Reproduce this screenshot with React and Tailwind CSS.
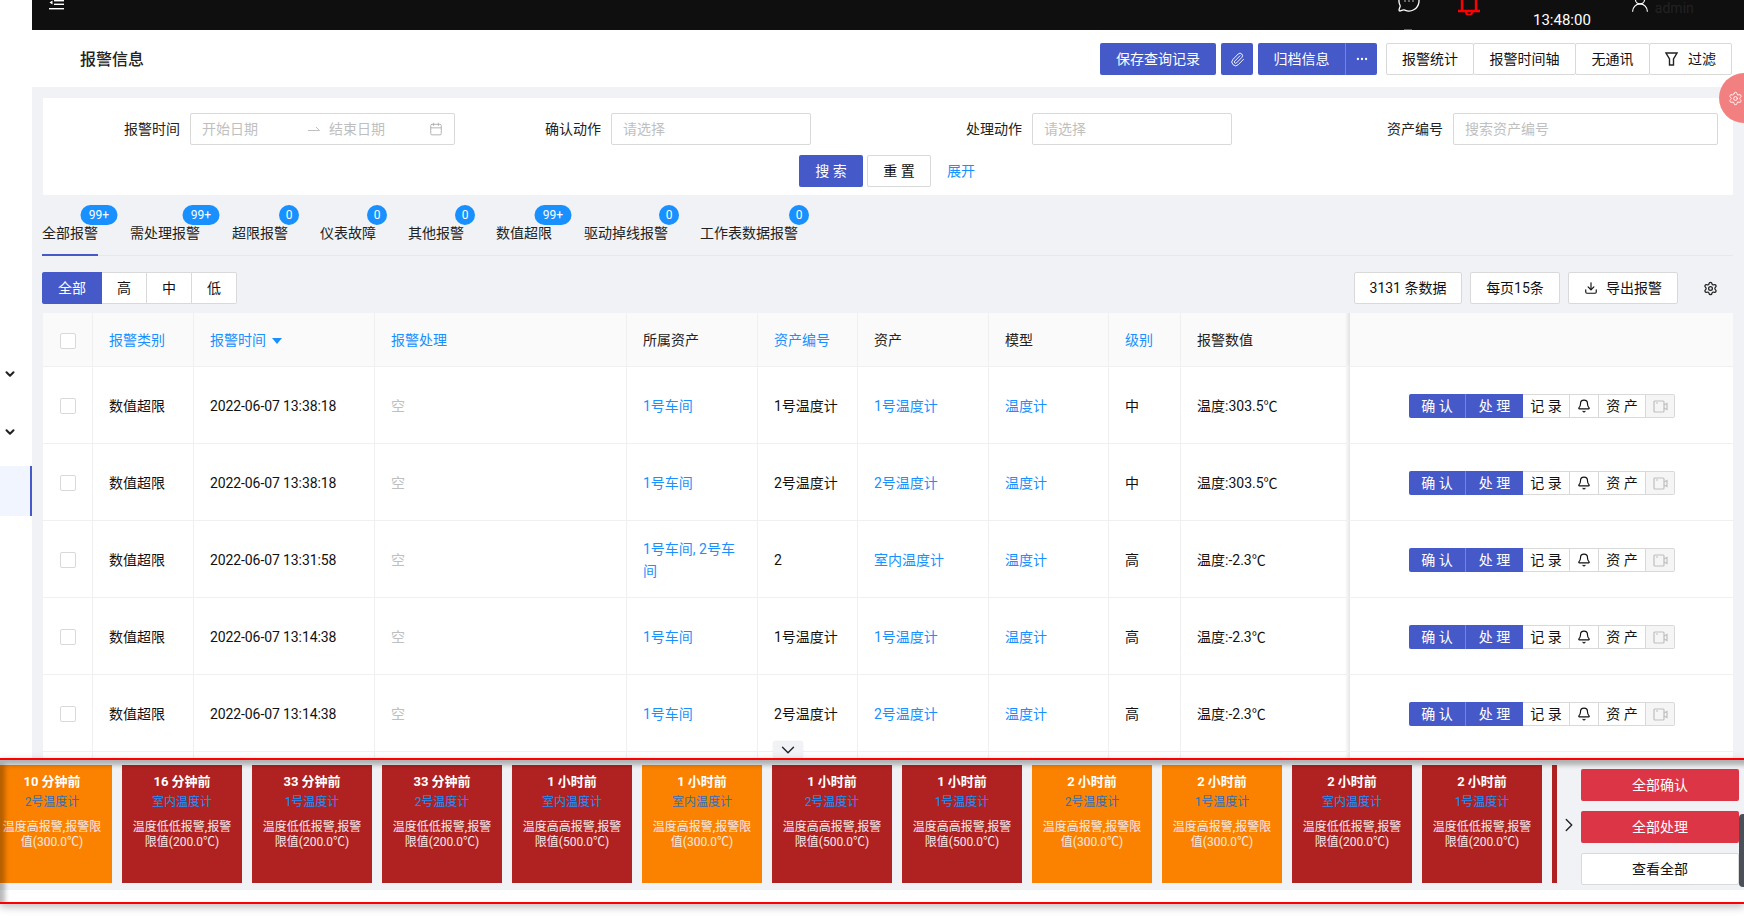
import { Bell, Calendar, ChevronDown, ChevronRight, Download, Ellipsis, MessageCircleMore, Paperclip, Settings, UserRound } from 'lucide-react';

const tabs = [
  { name: '全部报警', badge: '99+', active: true },
  { name: '需处理报警', badge: '99+' },
  { name: '超限报警', badge: '0' },
  { name: '仪表故障', badge: '0' },
  { name: '其他报警', badge: '0' },
  { name: '数值超限', badge: '99+' },
  { name: '驱动掉线报警', badge: '0' },
  { name: '工作表数据报警', badge: '0' },
];

const rows = [
  { time: '2022-06-07 13:38:18', place: '1号车间', code: '1号温度计', asset: '1号温度计', level: '中', value: '温度:303.5℃' },
  { time: '2022-06-07 13:38:18', place: '1号车间', code: '2号温度计', asset: '2号温度计', level: '中', value: '温度:303.5℃' },
  { time: '2022-06-07 13:31:58', place: '1号车间, 2号车间', code: '2', asset: '室内温度计', level: '高', value: '温度:-2.3℃' },
  { time: '2022-06-07 13:14:38', place: '1号车间', code: '1号温度计', asset: '1号温度计', level: '高', value: '温度:-2.3℃' },
  { time: '2022-06-07 13:14:38', place: '1号车间', code: '2号温度计', asset: '2号温度计', level: '高', value: '温度:-2.3℃' },
];

const low = '温度低低报警,报警限值(200.0℃)';
const highHigh = '温度高高报警,报警限值(500.0℃)';
const high = '温度高报警,报警限值(300.0℃)';

const cards = [
  { ago: '10 分钟前', device: '2号温度计', msg: high, warn: true },
  { ago: '16 分钟前', device: '室内温度计', msg: low },
  { ago: '33 分钟前', device: '1号温度计', msg: low },
  { ago: '33 分钟前', device: '2号温度计', msg: low },
  { ago: '1 小时前', device: '室内温度计', msg: highHigh },
  { ago: '1 小时前', device: '室内温度计', msg: high, warn: true },
  { ago: '1 小时前', device: '2号温度计', msg: highHigh },
  { ago: '1 小时前', device: '1号温度计', msg: highHigh },
  { ago: '2 小时前', device: '2号温度计', msg: high, warn: true },
  { ago: '2 小时前', device: '1号温度计', msg: high, warn: true },
  { ago: '2 小时前', device: '室内温度计', msg: low },
  { ago: '2 小时前', device: '1号温度计', msg: low },
];

const gridCols = 'grid grid-cols-[50px_101px_181px_252px_131px_100px_131px_120px_72px_169px_383px]';
const cell = 'flex items-center px-[16px] pt-[2px] border-r border-[#f0f0f0]';

function Field({ width, label, children }) {
  return (
    <div className={`flex items-center justify-end ${width}`}>
      <span className="mr-[10px] text-[#222]">{label}</span>
      {children}
    </div>
  );
}

function HeaderBtn({ children, className = '' }) {
  return (
    <button className={`flex h-8 items-center justify-center border border-[#d9d9d9] bg-white text-[#111] rounded-[2px] ${className}`}>
      {children}
    </button>
  );
}

function Checkbox() {
  return <span className="block h-4 w-4 rounded-[2px] border border-[#d9d9d9] bg-white" />;
}

function FixedShadow() {
  return <span className="absolute inset-y-0 left-[-5px] w-[5px] bg-gradient-to-l from-black/10 to-transparent" />;
}

function Actions() {
  return (
    <div className="flex h-6 items-center text-[#111]">
      <button className="flex h-6 w-[57px] items-center justify-center border-r border-[#7283d8] bg-[#4559c8] text-white rounded-l-[2px]">确 认</button>
      <button className="flex h-6 w-[57px] items-center justify-center bg-[#4559c8] text-white">处 理</button>
      <button className="flex h-6 w-[47px] items-center justify-center border-y border-r border-[#d9d9d9]">记 录</button>
      <button className="flex h-6 w-[29px] items-center justify-center border-y border-r border-[#d9d9d9]">
        <Bell size={14} strokeWidth={2} />
      </button>
      <button className="flex h-6 w-[47px] items-center justify-center border-y border-r border-[#d9d9d9]">资 产</button>
      <button className="flex h-6 w-[29px] items-center justify-center border-y border-r border-[#d9d9d9] bg-[#f5f5f5] rounded-r-[2px]">
        <svg width="15" height="13" viewBox="0 0 15 13" fill="none" stroke="#bfbfbf" strokeWidth="1.2">
          <rect x="1" y="1" width="10" height="11" rx="1" />
          <path d="M11 5l3-1.5v6L11 8M3 3h2" />
        </svg>
      </button>
    </div>
  );
}

function AlarmCard({ ago, device, msg, warn }) {
  return (
    <div className={`h-[118px] w-[120px] shrink-0 px-[8px] pt-[8px] text-center text-white ${warn ? 'bg-[#fb8200]' : 'bg-[#b02121]'}`}>
      <div className="text-[13px] font-bold leading-[18px]">{ago}</div>
      <div className={`mt-[1px] text-[12px] leading-[20px] ${warn ? 'text-[#2f6fc0]' : 'text-[#1890ff]'}`}>{device}</div>
      <div className="mt-[8px] text-[12px] leading-[15px] text-[#f5e9e9]">{msg}</div>
    </div>
  );
}

export default function App() {
  return (
    <div className="relative flex h-[917px] w-[1744px] overflow-hidden bg-white text-[14px] [font-family:Roboto,'Noto_Sans_CJK_SC',sans-serif]">
      {/* Sidebar */}
      <div className="flex w-8 shrink-0 flex-col">
        <ChevronDown size={14} strokeWidth={3.5} className="ml-[3px] mt-[367px] text-[#222]" />
        <ChevronDown size={14} strokeWidth={3.5} className="ml-[3px] mt-[44px] text-[#222]" />
        <div className="mt-[27px] h-[50px] border-r-2 border-[#4559c8] bg-[#f0f5ff]" />
      </div>

      <div className="flex min-w-0 flex-1 flex-col">
        {/* Top bar, scrolled a little out of view */}
        <div className="relative flex h-[30px] shrink-0 items-start overflow-hidden bg-[#0f0f10]">
          <svg width="15" height="10" viewBox="0 0 15 10" className="ml-[17px]" fill="#fff">
            <rect x="5" y="0" width="10" height="1.4" />
            <rect x="5" y="3.6" width="10" height="1.4" />
            <rect x="0" y="8" width="15" height="1.4" />
            <path d="M3.5 0.5v4l-3-2z" />
          </svg>
          <MessageCircleMore size={24} strokeWidth={1.3} className="ml-[1333px] mt-[-11px] text-white" />
          <svg width="24" height="15" viewBox="0 0 24 15" className="ml-[36px]" fill="none" stroke="#f00" strokeWidth="2">
            <path d="M5 0v10M19 0v10M1 11h22" strokeWidth="2.4" />
            <path d="M9 12a3 3 0 0 0 6 0" />
          </svg>
          <span className="ml-[52px] mt-[11px] text-[15px] leading-[18px] text-white">13:48:00</span>
          <UserRound size={22} strokeWidth={1.3} className="ml-[38px] mt-[-8px] text-white" />
          <span className="ml-[4px] mt-px text-[14px] leading-[14px] text-[#222]">admin</span>
          <span className="absolute bottom-0 left-[1372px] h-px w-2 bg-[#4559c8]" />
        </div>

        {/* Page header */}
        <div className="flex h-[57px] shrink-0 items-start pl-[48px] pr-[12px] pt-[13px]">
          <h1 className="mt-px text-[16px] font-medium leading-8 text-[#222]">报警信息</h1>
          <div className="ml-auto flex items-center">
            <button className="h-8 w-[116px] rounded-[2px] bg-[#4559c8] text-white">保存查询记录</button>
            <button className="ml-[5px] flex h-8 w-8 items-center justify-center rounded-[2px] bg-[#4559c8] text-white">
              <Paperclip size={15} strokeWidth={1.5} />
            </button>
            <button className="ml-[5px] h-8 w-[88px] rounded-l-[2px] border-r border-[#7283d8] bg-[#4559c8] text-white">归档信息</button>
            <button className="flex h-8 w-[31px] items-center justify-center rounded-r-[2px] bg-[#4559c8] text-white">
              <Ellipsis size={14} />
            </button>
            <HeaderBtn className="ml-[9px] w-[88px]">报警统计</HeaderBtn>
            <HeaderBtn className="ml-[-1px] w-[103px]">报警时间轴</HeaderBtn>
            <HeaderBtn className="ml-[-1px] w-[75px]">无通讯</HeaderBtn>
            <HeaderBtn className="ml-[-1px] w-[83px] gap-[10px]">
              <svg width="13" height="14" viewBox="0 0 13 14" fill="none" stroke="#222" strokeWidth="1.4">
                <path d="M1 1h11L8.5 7v6h-4V7z" />
              </svg>
              过滤
            </HeaderBtn>
          </div>
        </div>

        {/* Content */}
        <div className="min-h-0 flex-1 overflow-hidden bg-[#f0f2f5] px-[11px] pt-[11px]">
          <div className="h-[97px] bg-white pt-[15px] text-[14px]">
            <div className="flex">
              <Field width="w-[412px]" label="报警时间">
                <div className="flex h-8 w-[265px] items-center rounded-[2px] border border-[#d9d9d9] pl-[11px] pr-[11px] text-[#bfbfbf]">
                  <span>开始日期</span>
                  <svg width="14" height="8" viewBox="0 0 14 8" className="ml-[49px]" fill="none" stroke="#bfbfbf">
                    <path d="M1 5.5h11.5L9 2" />
                  </svg>
                  <span className="ml-[8px]">结束日期</span>
                  <Calendar size={14} strokeWidth={1.5} className="ml-auto text-[#aaa]" />
                </div>
              </Field>
              <Field width="w-[356px]" label="确认动作">
                <div className="flex h-8 w-[200px] items-center rounded-[2px] border border-[#d9d9d9] pl-[11px] text-[#bfbfbf]">请选择</div>
              </Field>
              <Field width="w-[421px]" label="处理动作">
                <div className="flex h-8 w-[200px] items-center rounded-[2px] border border-[#d9d9d9] pl-[11px] text-[#bfbfbf]">请选择</div>
              </Field>
              <Field width="w-[486px]" label="资产编号">
                <div className="flex h-8 w-[265px] items-center rounded-[2px] border border-[#d9d9d9] pl-[11px] text-[#bfbfbf]">搜索资产编号</div>
              </Field>
            </div>
            <div className="mt-[10px] flex items-center justify-center pr-[2px]">
              <button className="h-8 w-16 rounded-[2px] bg-[#4559c8] text-white">搜 索</button>
              <button className="ml-[4px] h-8 w-16 rounded-[2px] border border-[#d9d9d9] text-[#111]">重 置</button>
              <span className="ml-[16px] text-[#1890ff]">展开</span>
            </div>
          </div>

          {/* Tabs */}
          <div className="ml-[-1px] flex h-[61px] gap-[32px] border-b border-[#e8e8e8]">
            {tabs.map((t) => (
              <div key={t.name} className={`relative flex h-[61px] items-end text-[#222] ${t.active ? 'border-b-2 border-[#4559c8] pb-[10px]' : 'pb-[12px]'}`}>
                {t.name}
                <span className={`absolute right-[-1px] top-[10px] flex h-5 translate-x-1/2 items-center justify-center rounded-full bg-[#1890ff] text-[12px] text-white ${t.badge === '0' ? 'w-5' : 'w-[37px]'}`}>
                  {t.badge}
                </span>
              </div>
            ))}
          </div>

          {/* Level filter and table tools */}
          <div className="ml-[-1px] mr-[1px] mt-[16px] flex h-8 items-center">
            <button className="h-8 w-[60px] rounded-l-[2px] bg-[#4559c8] text-white">全部</button>
            <button className="h-8 w-[45px] border-y border-r border-[#d9d9d9] bg-white text-[#111]">高</button>
            <button className="h-8 w-[45px] border-y border-r border-[#d9d9d9] bg-white text-[#111]">中</button>
            <button className="h-8 w-[45px] rounded-r-[2px] border-y border-r border-[#d9d9d9] bg-white text-[#111]">低</button>
            <HeaderBtn className="ml-auto w-[108px]">3131 条数据</HeaderBtn>
            <HeaderBtn className="ml-[8px] w-[90px]">每页15条</HeaderBtn>
            <HeaderBtn className="ml-[8px] w-[110px] gap-[8px]">
              <Download size={14} strokeWidth={2} />
              导出报警
            </HeaderBtn>
            <Settings size={15} strokeWidth={2} className="ml-[25px] mr-[14px] text-[#222]" />
          </div>

          {/* Table */}
          <div className="mt-[9px] bg-white">
            <div className={`${gridCols} h-[54px] border-b border-[#f0f0f0] bg-[#fafafa] text-[#222]`}>
              <div className={`${cell} justify-center !px-0`}><Checkbox /></div>
              <div className={`${cell} text-[#1890ff]`}>报警类别</div>
              <div className={`${cell} text-[#1890ff]`}>
                报警时间
                <svg width="10" height="6" viewBox="0 0 10 6" className="ml-[6px]" fill="#1890ff"><path d="M0 0h10L5 6z" /></svg>
              </div>
              <div className={`${cell} text-[#1890ff]`}>报警处理</div>
              <div className={cell}>所属资产</div>
              <div className={`${cell} text-[#1890ff]`}>资产编号</div>
              <div className={cell}>资产</div>
              <div className={cell}>模型</div>
              <div className={`${cell} text-[#1890ff]`}>级别</div>
              <div className={`${cell} !border-r-0`}>报警数值</div>
              <div className="relative"><FixedShadow /></div>
            </div>
            {rows.map((r, i) => (
              <div key={i} className={`${gridCols} h-[77px] border-b border-[#f0f0f0] text-[#111]`}>
                <div className={`${cell} justify-center !px-0`}><Checkbox /></div>
                <div className={cell}>数值超限</div>
                <div className={`${cell} tracking-[-0.1px]`}>{r.time}</div>
                <div className={`${cell} text-[#bfbfbf]`}>空</div>
                <div className={`${cell} leading-[22px] text-[#1890ff]`}>{r.place}</div>
                <div className={cell}>{r.code}</div>
                <div className={`${cell} text-[#1890ff]`}>{r.asset}</div>
                <div className={`${cell} text-[#1890ff]`}>温度计</div>
                <div className={cell}>{r.level}</div>
                <div className={`${cell} !border-r-0`}>{r.value}</div>
                <div className="relative flex items-center pl-[59px] pt-[2px]">
                  <FixedShadow />
                  <Actions />
                </div>
              </div>
            ))}
            <div className={`${gridCols} h-[8px]`}>
              {['a', 'b', 'c', 'd', 'e', 'f', 'g', 'h', 'i'].map((k) => (
                <div key={k} className="border-r border-[#f0f0f0]" />
              ))}
              <div />
              <div className="relative"><FixedShadow /></div>
            </div>
          </div>
        </div>
        <div className="h-[13px] shrink-0 bg-white" />
      </div>

      {/* Floating settings */}
      <div className="absolute left-[1719px] top-[73px] flex h-[50px] w-[50px] items-center rounded-full bg-[#f28080] pl-[9px] text-white">
        <Settings size={15} strokeWidth={1.5} />
      </div>

      {/* Collapse handle */}
      <div className="absolute left-[773px] top-[742px] flex h-4 w-[30px] items-center justify-center rounded-t-[3px] bg-[#f0f2f5] text-[#222] shadow-[0_-1px_2px_rgba(0,0,0,0.08)]">
        <ChevronDown size={22} strokeWidth={1.5} />
      </div>

      {/* Alarm bar */}
      <div className="absolute left-0 top-[758px] h-[146px] w-[1744px] border-y-2 border-[#ff0000] bg-white shadow-[0_3px_8px_rgba(0,0,0,0.25)]">
        <div className="flex h-[130px] bg-[#f0f2f5]">
          <div className="w-[1557px] shrink-0 overflow-hidden pt-[5px]">
            <div className="ml-[-8px] flex gap-[10px]">
              {cards.map((c, i) => (
                <AlarmCard key={i} {...c} />
              ))}
              <div className="h-[118px] w-[120px] shrink-0 bg-[#b02121]" />
            </div>
          </div>
          <div className="flex w-[24px] items-center justify-center text-[#222]">
            <ChevronRight size={22} strokeWidth={1.5} />
          </div>
          <div className="flex w-[158px] flex-col gap-[10px] pt-[9px]">
            <button className="h-8 rounded-[2px] bg-[#dc3545] text-white">全部确认</button>
            <button className="h-8 rounded-[2px] bg-[#dc3545] text-white">全部处理</button>
            <button className="h-8 rounded-[2px] border border-[#d9d9d9] bg-white text-[#111]">查看全部</button>
          </div>
        </div>
        <div className="pointer-events-none absolute inset-0 shadow-[inset_5px_5px_5px_rgba(0,0,0,0.28)]" />
        <div className="absolute right-0 top-[54px] h-[73px] w-[5px] rounded-l-[4px] bg-[#4b4f57]" />
      </div>
    </div>
  );
}
